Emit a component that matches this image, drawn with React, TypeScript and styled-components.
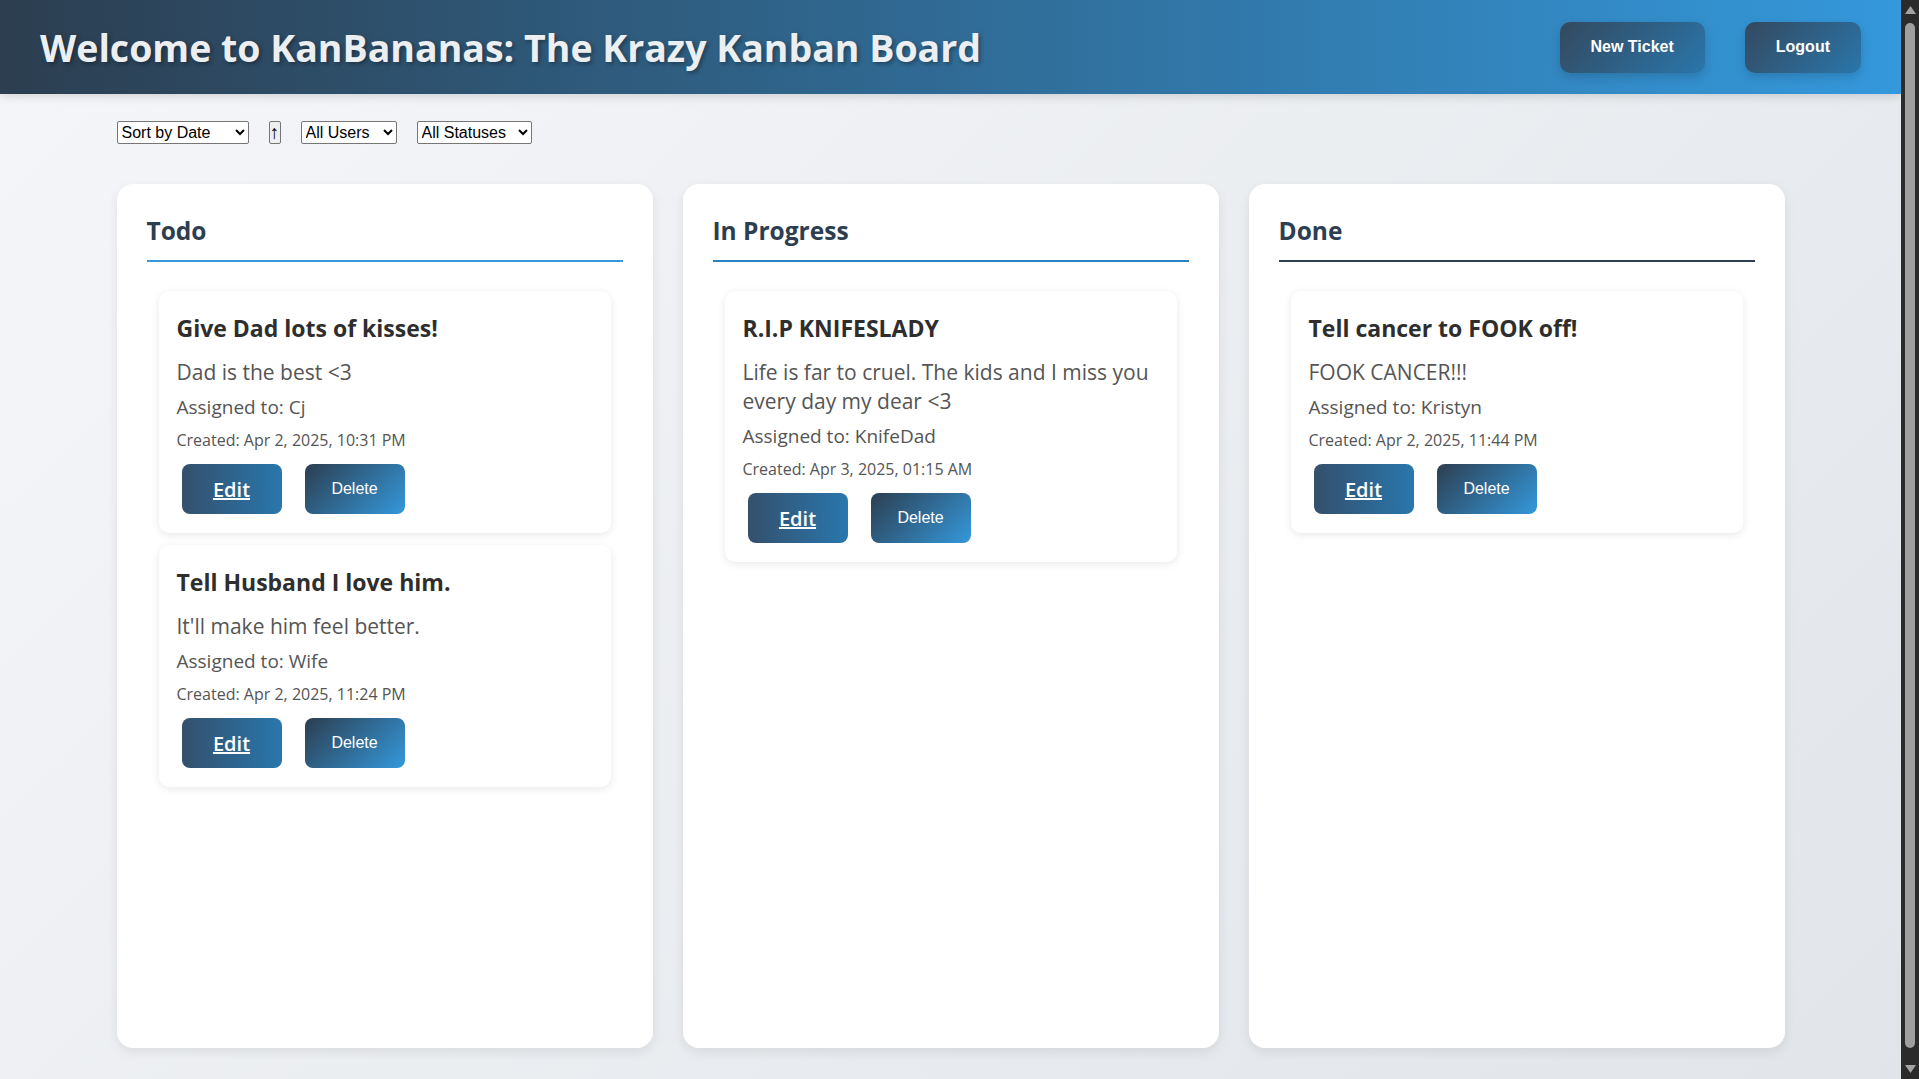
import React from 'react';
import styled, { createGlobalStyle } from 'styled-components';

const GlobalStyle = createGlobalStyle`
  html, body {
    margin: 0;
    height: 100%;
    overflow: hidden;
  }
  body {
    font-family: "Open Sans", "Noto Sans", sans-serif;
    background: #eceff2;
  }
`;

const Shell = styled.div`
  display: flex;
  height: 100vh;
`;

const Viewport = styled.div`
  flex: 1;
  min-width: 0;
  overflow-y: auto;
  scrollbar-width: none;
  background: linear-gradient(135deg, #f5f6f9 0%, #e1e5e9 100%);
  &::-webkit-scrollbar { display: none; }
`;

const ScrollRail = styled.div`
  flex: none;
  width: 18px;
  display: flex;
  flex-direction: column;
  align-items: center;
  padding: 6px 0;
  box-sizing: border-box;
  background: #2b2b2b;
`;

const Thumb = styled.div`
  flex: 1;
  width: 10px;
  margin: 9px 0 17px;
  border-radius: 5px;
  background: #9f9f9f;
`;

const Arrow = ({ down }: { down?: boolean }) => (
  <svg width="11" height="8" viewBox="0 0 11 8" style={{ display: 'block' }}>
    <polygon points={down ? '0,0 11,0 5.5,8' : '5.5,0 11,8 0,8'} fill="#a3a3a3" />
  </svg>
);

const Header = styled.header`
  display: flex;
  align-items: center;
  justify-content: space-between;
  height: 94px;
  padding: 0 40px;
  box-sizing: border-box;
  background: linear-gradient(90deg, #2c3e50 0%, #3498db 100%);
  box-shadow: 0 2px 10px rgba(0, 0, 0, 0.15);
`;

const Title = styled.h1`
  margin: 0;
  font-size: 37.5px;
  line-height: 1.2;
  font-weight: 700;
  color: #eceff1;
  text-shadow: 2px 2px 4px rgba(0, 0, 0, 0.35);
`;

const HeaderActions = styled.div`
  display: flex;
  gap: 40px;
`;

const HeaderButton = styled.button`
  height: 51px;
  padding: 0 31px;
  border: none;
  border-radius: 10px;
  font: bold 16px "Liberation Sans", Arial, sans-serif;
  color: #fff;
  background: linear-gradient(135deg, #34495e 0%, #2a76ab 100%);
  box-shadow: 0 4px 10px rgba(0, 0, 0, 0.15);
  cursor: pointer;
`;

const Main = styled.main`
  width: 1668px;
  margin: 0 auto;
  padding: 27px 0 52px;
`;

const Filters = styled.div`
  display: flex;
  gap: 20px;
  height: 23px;
  margin-bottom: 40px;
`;

const Select = styled.select<{ $w: number }>`
  width: ${(p) => p.$w}px;
  height: 23px;
  font: 16px "Liberation Sans", Arial, sans-serif;
  color: #000;
  background: #fff;
  border: 1px solid #767676;
  border-radius: 2px;
`;

const SortToggle = styled.button`
  width: 12px;
  height: 23px;
  padding: 0;
  overflow: hidden;
  font: 19px/1 "Liberation Sans", Arial, sans-serif;
  color: #000;
  background: #efefef;
  border: 1px solid #767676;
  border-radius: 2px;
`;

const Board = styled.div`
  display: grid;
  grid-template-columns: repeat(3, 1fr);
  gap: 30px;
`;

const Column = styled.section`
  min-height: 864px;
  box-sizing: border-box;
  padding: 31px 30px 30px;
  background: #fff;
  border-radius: 16px;
  box-shadow: 0 4px 12px rgba(0, 0, 0, 0.08);
`;

const ColumnTitle = styled.h2<{ $accent: string }>`
  margin: 0 0 17px;
  padding-bottom: 13px;
  font-size: 24.5px;
  line-height: 32px;
  font-weight: 700;
  color: #2c3e50;
  border-bottom: 2px solid ${(p) => p.$accent};
`;

const CardList = styled.div`
  display: flex;
  flex-direction: column;
  gap: 12px;
  padding: 12px;
`;

const Card = styled.article`
  padding: 22px 18px 19px;
  background: #fff;
  border-radius: 10px;
  box-shadow: 0 2px 8px rgba(0, 0, 0, 0.09);
`;

const CardTitle = styled.h3`
  margin: 0 0 15px;
  font-size: 23px;
  line-height: 30px;
  font-weight: 700;
  color: #2e2e2e;
`;

const Description = styled.p`
  margin: 0 0 7px;
  font-size: 21px;
  line-height: 29px;
  color: #555;
`;

const Assigned = styled.p`
  margin: 0 0 9px;
  font-size: 19px;
  line-height: 26px;
  color: #555;
`;

const Created = styled.p`
  margin: 0 0 13px;
  font-size: 16px;
  line-height: 22px;
  color: #555;
`;

const Actions = styled.div`
  display: flex;
  gap: 23px;
  padding-left: 5px;
`;

const EditLink = styled.a`
  display: flex;
  align-items: center;
  justify-content: center;
  width: 100px;
  height: 50px;
  border-radius: 8px;
  font-size: 20px;
  font-weight: 600;
  color: #fff;
  text-decoration: underline;
  background: linear-gradient(90deg, #34506c 0%, #2977ad 100%);
`;

const DeleteButton = styled.button`
  width: 100px;
  height: 50px;
  border: none;
  border-radius: 8px;
  font: 16px "Liberation Sans", Arial, sans-serif;
  color: #fff;
  background: linear-gradient(135deg, #2c3e50 0%, #3498db 100%);
  cursor: pointer;
`;

type Ticket = {
  title: string;
  description: string;
  assignee: string;
  created: string;
};

const columns: { name: string; accent: string; tickets: Ticket[] }[] = [
  {
    name: 'Todo',
    accent: '#3498db',
    tickets: [
      {
        title: 'Give Dad lots of kisses!',
        description: 'Dad is the best <3',
        assignee: 'Cj',
        created: 'Apr 2, 2025, 10:31 PM',
      },
      {
        title: 'Tell Husband I love him.',
        description: "It'll make him feel better.",
        assignee: 'Wife',
        created: 'Apr 2, 2025, 11:24 PM',
      },
    ],
  },
  {
    name: 'In Progress',
    accent: '#2b82c0',
    tickets: [
      {
        title: 'R.I.P KNIFESLADY',
        description: 'Life is far to cruel. The kids and I miss you every day my dear <3',
        assignee: 'KnifeDad',
        created: 'Apr 3, 2025, 01:15 AM',
      },
    ],
  },
  {
    name: 'Done',
    accent: '#2c3e50',
    tickets: [
      {
        title: 'Tell cancer to FOOK off!',
        description: 'FOOK CANCER!!!',
        assignee: 'Kristyn',
        created: 'Apr 2, 2025, 11:44 PM',
      },
    ],
  },
];

export default function App() {
  return (
    <>
      <GlobalStyle />
      <Shell>
        <Viewport>
          <Header>
            <Title>Welcome to KanBananas: The Krazy Kanban Board</Title>
            <HeaderActions>
              <HeaderButton>New Ticket</HeaderButton>
              <HeaderButton>Logout</HeaderButton>
            </HeaderActions>
          </Header>
          <Main>
            <Filters>
              <Select $w={132} defaultValue="date">
                <option value="date">Sort by Date</option>
                <option value="status">Sort by Status</option>
              </Select>
              <SortToggle>↑</SortToggle>
              <Select $w={96} defaultValue="all">
                <option value="all">All Users</option>
              </Select>
              <Select $w={115} defaultValue="all">
                <option value="all">All Statuses</option>
              </Select>
            </Filters>
            <Board>
              {columns.map((col) => (
                <Column key={col.name}>
                  <ColumnTitle $accent={col.accent}>{col.name}</ColumnTitle>
                  <CardList>
                    {col.tickets.map((t) => (
                      <Card key={t.title}>
                        <CardTitle>{t.title}</CardTitle>
                        <Description>{t.description}</Description>
                        <Assigned>Assigned to: {t.assignee}</Assigned>
                        <Created>Created: {t.created}</Created>
                        <Actions>
                          <EditLink href="#">Edit</EditLink>
                          <DeleteButton>Delete</DeleteButton>
                        </Actions>
                      </Card>
                    ))}
                  </CardList>
                </Column>
              ))}
            </Board>
          </Main>
        </Viewport>
        <ScrollRail aria-hidden>
          <Arrow />
          <Thumb />
          <Arrow down />
        </ScrollRail>
      </Shell>
    </>
  );
}
